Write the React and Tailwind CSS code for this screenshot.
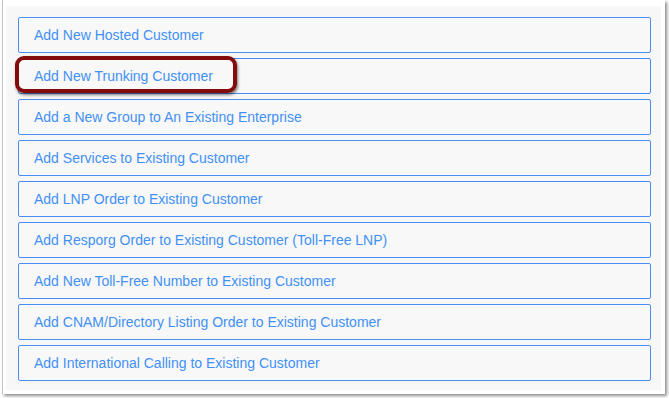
const items = [
  'Add New Hosted Customer',
  'Add New Trunking Customer',
  'Add a New Group to An Existing Enterprise',
  'Add Services to Existing Customer',
  'Add LNP Order to Existing Customer',
  'Add Resporg Order to Existing Customer (Toll-Free LNP)',
  'Add New Toll-Free Number to Existing Customer',
  'Add CNAM/Directory Listing Order to Existing Customer',
  'Add International Calling to Existing Customer',
];

export default function App() {
  return (
    <div className="w-[669px] h-[398px] bg-white" style={{ fontFamily: '"Liberation Sans", Arial, sans-serif' }}>
      <div className="ml-[2px] w-[663px] h-[394px] bg-white border-l border-[#c4c4c4] shadow-[2px_2px_3px_rgba(0,0,0,0.45)] pt-[6px] pl-[3px] pr-[4px]">
        <div className="h-[384px] bg-[#f7f7f7] pt-[11px] pl-[12px] pr-[10px] flex flex-col gap-[5px]">
          {items.map((label, i) => (
            <div key={label} className="relative">
              <div className="h-[36px] flex items-center px-[15px] border border-[#4a8ef5] rounded-[2px] text-[14px] text-[#4290f6] bg-[#f8f8f8]">
                {label}
              </div>
              {i === 1 && (
                <div className="absolute left-[-3px] top-[-2px] w-[222px] h-[37px] border-[4px] border-[#820b0b] rounded-[9px] shadow-[1px_2px_3px_rgba(0,0,0,0.5)]" />
              )}
            </div>
          ))}
        </div>
      </div>
    </div>
  );
}
